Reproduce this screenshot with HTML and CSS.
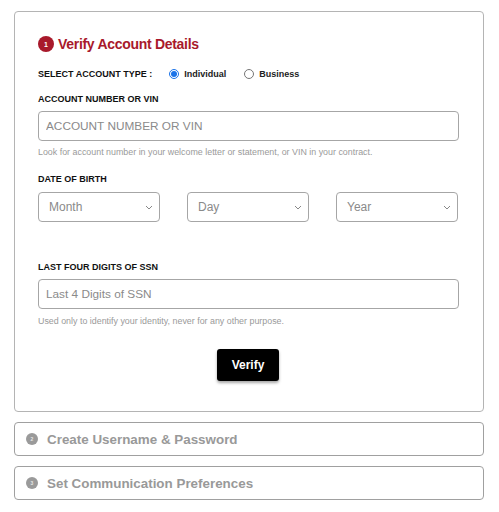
FILE: index.html
```html
<!DOCTYPE html>
<html lang="en">
<head>
<meta charset="utf-8">
<title>Verify Account</title>
<link rel="stylesheet" href="styles.css">
</head>
<body>
<div class="page">
  <section class="card card-active">
    <h2 class="step-title"><span class="step-num">1</span>Verify Account Details</h2>
    <div class="type-row">
      <span class="label">SELECT ACCOUNT TYPE :</span>
      <label class="radio"><input type="radio" name="type" checked><span>Individual</span></label>
      <label class="radio"><input type="radio" name="type"><span>Business</span></label>
    </div>
    <div class="label label-field">ACCOUNT NUMBER OR VIN</div>
    <input class="text-input" type="text" placeholder="ACCOUNT NUMBER OR VIN">
    <p class="help">Look for account number in your welcome letter or statement, or VIN in your contract.</p>
    <div class="label label-dob">DATE OF BIRTH</div>
    <div class="dob-row">
      <div class="select"><span>Month</span><svg class="chev" width="8" height="5" viewBox="0 0 8 5"><path d="M1 1l3 3 3-3" fill="none" stroke="#888" stroke-width="1"/></svg></div>
      <div class="select"><span>Day</span><svg class="chev" width="8" height="5" viewBox="0 0 8 5"><path d="M1 1l3 3 3-3" fill="none" stroke="#888" stroke-width="1"/></svg></div>
      <div class="select"><span>Year</span><svg class="chev" width="8" height="5" viewBox="0 0 8 5"><path d="M1 1l3 3 3-3" fill="none" stroke="#888" stroke-width="1"/></svg></div>
    </div>
    <div class="label label-ssn">LAST FOUR DIGITS OF SSN</div>
    <input class="text-input" type="text" placeholder="Last 4 Digits of SSN">
    <p class="help help-ssn">Used only to identify your identity, never for any other purpose.</p>
    <div class="actions"><button class="btn" type="button">Verify</button></div>
  </section>
  <section class="card card-collapsed">
    <span class="step-num small">2</span><span class="collapsed-title">Create Username &amp; Password</span>
  </section>
  <section class="card card-collapsed">
    <span class="step-num small">3</span><span class="collapsed-title">Set Communication Preferences</span>
  </section>
</div>
</body>
</html>
```

FILE: styles.css
```css
* { box-sizing: border-box; }
html, body { margin: 0; padding: 0; background: #fff; }
body { font-family: "Liberation Sans", Arial, sans-serif; color: #111; }

.page {
  width: 470px;
  margin: 11px 0 0 14px;
  display: flex;
  flex-direction: column;
  gap: 10px;
}

.card {
  border: 1px solid #b4b4b4;
  border-radius: 4px;
  background: #fff;
}

.card-active {
  padding: 24px 25px 30px 23px;
  display: flex;
  flex-direction: column;
}

.step-title {
  margin: 0;
  height: 16px;
  display: flex;
  align-items: center;
  font-size: 14px;
  font-weight: bold;
  color: #a8192b;
  letter-spacing: -0.3px;
}

.step-num {
  width: 16px;
  height: 16px;
  border-radius: 50%;
  background: #a8192b;
  color: #fff;
  font-size: 7px;
  font-weight: bold;
  display: inline-flex;
  align-items: center;
  justify-content: center;
  margin-right: 4px;
  letter-spacing: 0;
  flex: none;
}

.type-row {
  margin-top: 16px;
  height: 12px;
  display: flex;
  align-items: center;
}

.label {
  font-size: 9px;
  font-weight: bold;
  line-height: 12px;
  color: #111;
}

.radio {
  display: inline-flex;
  align-items: center;
  font-size: 9px;
  font-weight: bold;
  color: #222;
  margin-left: 17px;
}
.radio + .radio { margin-left: 18px; }
.radio input {
  width: 10px;
  height: 10px;
  margin: 0 5px 1px 0;
  accent-color: #1a73e8;
}

.label-field { margin-top: 13px; }

.text-input {
  margin-top: 6px;
  width: 421px;
  height: 30px;
  border: 1px solid #a6a6a6;
  border-radius: 4px;
  padding: 0 7px;
  font-family: "Liberation Sans", Arial, sans-serif;
  font-size: 11.8px;
  color: #333;
  outline: none;
}
.text-input::placeholder { color: #8a8a8a; }

.help {
  margin: 6px 0 0;
  font-size: 8.9px;
  line-height: 11px;
  color: #9a9a9a;
}
.help-ssn { margin-top: 7px; }

.label-dob { margin-top: 15px; }

.dob-row {
  margin-top: 7px;
  width: 420px;
  display: flex;
  justify-content: space-between;
}

.select {
  width: 122px;
  height: 30px;
  border: 1px solid #a6a6a6;
  border-radius: 4px;
  display: flex;
  align-items: center;
  justify-content: space-between;
  padding: 0 6px 0 10px;
  font-size: 12px;
  color: #8a8a8a;
}
.chev { margin-top: 1px; }

.label-ssn { margin-top: 39px; }

.actions {
  margin-top: 22px;
  display: flex;
  justify-content: center;
}

.btn {
  width: 62px;
  height: 32px;
  border: none;
  border-radius: 3px;
  background: #000;
  color: #fff;
  font-family: "Liberation Sans", Arial, sans-serif;
  font-size: 12px;
  font-weight: bold;
  box-shadow: 0 2px 3px rgba(0,0,0,0.35);
}

.card-collapsed {
  height: 34px;
  display: flex;
  align-items: center;
  padding-left: 11px;
  border-color: #a0a0a0;
}

.step-num.small {
  width: 12px;
  height: 12px;
  background: #9a9a9a;
  color: #e6e6e6;
  font-size: 5px;
  margin-right: 9px;
}

.collapsed-title {
  font-size: 13.4px;
  font-weight: bold;
  color: #999;
}
```
